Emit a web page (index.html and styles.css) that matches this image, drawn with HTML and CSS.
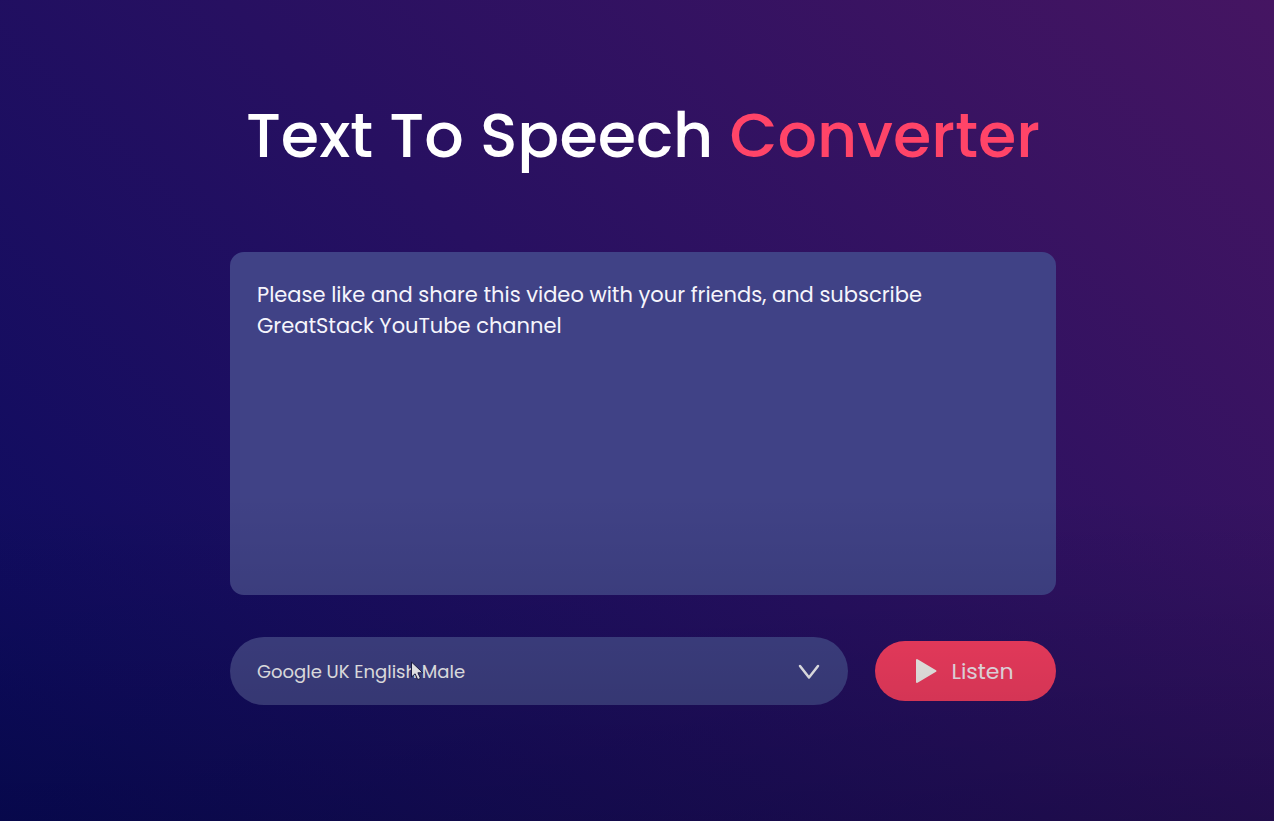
FILE: index.html
```html
<!DOCTYPE html>
<html lang="en">
<head>
<meta charset="utf-8">
<meta name="viewport" content="width=device-width, initial-scale=1">
<title>Text To Speech Converter</title>
<link rel="stylesheet" href="styles.css">
</head>
<body>
<main class="hero">
  <h1 class="title">Text To Speech <span class="accent">Converter</span></h1>
  <form class="converter">
    <textarea class="message" aria-label="Text to speak" spellcheck="false">Please like and share this video with your friends, and subscribe
GreatStack YouTube channel</textarea>
    <div class="controls">
      <div class="voice">
        <select class="voice-select" aria-label="Voice">
          <option>Google UK English Male</option>
        </select>
        <svg class="chevron" viewBox="0 0 22 16" aria-hidden="true"><path d="M2 2 11 13.500 20 2"/></svg>
        <svg class="pointer" viewBox="0 0 14 20" aria-hidden="true"><path d="M1.500 1v15l3.600-3.200 2.600 5.800 2.800-1.200-2.600-5.600h5z"/></svg>
      </div>
      <button class="listen" type="button">
        <svg class="play" viewBox="0 0 22 26" aria-hidden="true"><path d="M2 2v22L20.500 13z"/></svg>
        <span>Listen</span>
      </button>
    </div>
  </form>
</main>
</body>
</html>
```
FILE: styles.css
```css
* {
  box-sizing: border-box;
  margin: 0;
  padding: 0;
  font-family: Poppins, Inter, "Open Sans", sans-serif;
}

.hero {
  position: relative;
  display: flex;
  flex-direction: column;
  align-items: center;
  min-height: 100vh;
  padding: 88px 12px 80px 24px;
  color: #fff;
  background: linear-gradient(45deg, #090b60, #451562);
}

/* Shade that deepens towards the bottom edge of the page. */
.hero::after {
  content: "";
  position: absolute;
  inset: 0;
  background: linear-gradient(transparent 60%, rgba(0, 0, 16, 0.12) 80%, rgba(0, 0, 16, 0.26));
  pointer-events: none;
}

.title {
  margin-bottom: 68px;
  font-size: 62px;
  font-weight: 500;
  line-height: 96px;
  text-align: center;
}

.accent {
  color: #ff4468;
}

.converter {
  display: flex;
  flex-direction: column;
  gap: 42px;
  width: 100%;
  max-width: 826px;
}

.message {
  display: block;
  width: 100%;
  height: 343px;
  padding: 27px;
  border: 0;
  border-radius: 14px;
  outline: 0;
  background: #404286;
  color: #f6f5fc;
  font-size: 21px;
  line-height: 31px;
  resize: none;
}

.controls {
  display: flex;
  align-items: center;
  gap: 27px;
}

.voice {
  position: relative;
  flex: 1;
}

.voice-select {
  display: block;
  width: 100%;
  height: 68px;
  padding: 0 60px 0 27px;
  border: 0;
  border-radius: 34px;
  outline: 0;
  appearance: none;
  background: #404286;
  color: #fafafa;
  font-size: 18px;
}

.chevron {
  position: absolute;
  top: 27px;
  right: 28px;
  width: 22px;
  height: 16px;
  fill: none;
  stroke: #f8f8fa;
  stroke-width: 2.5;
  stroke-linecap: round;
  stroke-linejoin: round;
  pointer-events: none;
}

.pointer {
  position: absolute;
  top: 24px;
  left: 180px;
  width: 14px;
  height: 20px;
  fill: #fff;
  stroke: #1d1d45;
  stroke-width: 1;
  pointer-events: none;
}

.listen {
  display: flex;
  align-items: center;
  justify-content: center;
  gap: 14px;
  width: 181px;
  height: 60px;
  padding-right: 2px;
  border: 0;
  border-radius: 30px;
  background: #fc3f62;
  color: #fbeef4;
  font-size: 22px;
}

.play {
  width: 22px;
  height: 26px;
  fill: #fbfaf4;
  stroke: #fbfaf4;
  stroke-width: 2;
  stroke-linejoin: round;
}
```
